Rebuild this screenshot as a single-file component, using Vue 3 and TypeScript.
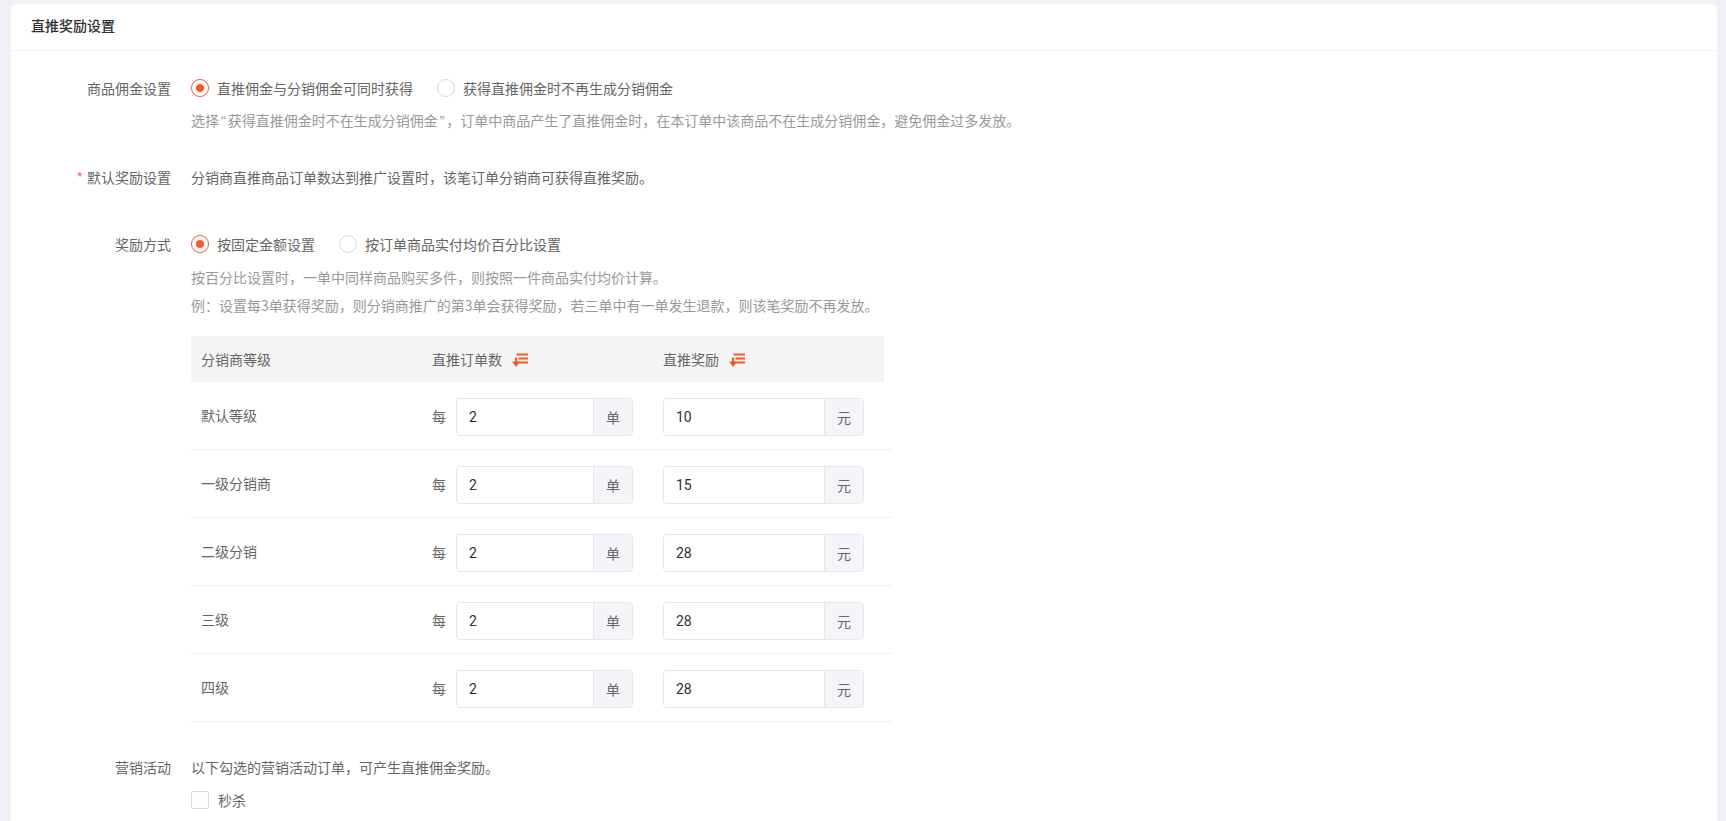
<script setup lang="ts">
interface Row { name: string; orders: string; reward: string }
const rows: Row[] = [
  { name: '默认等级', orders: '2', reward: '10' },
  { name: '一级分销商', orders: '2', reward: '15' },
  { name: '二级分销', orders: '2', reward: '28' },
  { name: '三级', orders: '2', reward: '28' },
  { name: '四级', orders: '2', reward: '28' },
]
</script>

<template>
  <div class="page">
    <div class="card">
      <div class="head">直推奖励设置</div>
      <div class="body">
        <div class="item first">
          <div class="label">商品佣金设置</div>
          <div class="content">
            <div class="radios">
              <span class="radio on"></span><span class="rtext gap1">直推佣金与分销佣金可同时获得</span>
              <span class="radio"></span><span class="rtext">获得直推佣金时不再生成分销佣金</span>
            </div>
            <div class="hint h1">选择<span class="quote">“</span>获得直推佣金时不在生成分销佣金<span class="quote">”</span>，订单中商品产生了直推佣金时，在本订单中该商品不在生成分销佣金，避免佣金过多发放。</div>
          </div>
        </div>
        <div class="item second">
          <div class="label"><span class="star">*</span>默认奖励设置</div>
          <div class="content text">分销商直推商品订单数达到推广设置时，该笔订单分销商可获得直推奖励。</div>
        </div>
        <div class="item third">
          <div class="label">奖励方式</div>
          <div class="content">
            <div class="radios">
              <span class="radio on"></span><span class="rtext gap1">按固定金额设置</span>
              <span class="radio"></span><span class="rtext">按订单商品实付均价百分比设置</span>
            </div>
            <div class="hint h2">按百分比设置时，一单中同样商品购买多件，则按照一件商品实付均价计算。</div>
            <div class="hint h3">例：设置每3单获得奖励，则分销商推广的第3单会获得奖励，若三单中有一单发生退款，则该笔奖励不再发放。</div>
            <div class="table">
              <div class="thead">
                <div class="c1">分销商等级</div>
                <div class="c2">直推订单数
                  <svg class="sort" viewBox="0 0 16 14" width="16" height="14"><g fill="#f4592a"><rect x="4.5" y="0.5" width="11.5" height="2"/><rect x="6.5" y="4.5" width="9.5" height="2"/><rect x="6.5" y="8.5" width="9.5" height="2"/><rect x="3" y="4.5" width="2.2" height="6"/><path d="M0 8.5h8.2L4.1 14z"/></g></svg>
                </div>
                <div class="c3">直推奖励
                  <svg class="sort" viewBox="0 0 16 14" width="16" height="14"><g fill="#f4592a"><rect x="4.5" y="0.5" width="11.5" height="2"/><rect x="6.5" y="4.5" width="9.5" height="2"/><rect x="6.5" y="8.5" width="9.5" height="2"/><rect x="3" y="4.5" width="2.2" height="6"/><path d="M0 8.5h8.2L4.1 14z"/></g></svg>
                </div>
              </div>
              <div v-for="r in rows" :key="r.name" class="trow">
                <div class="c1 rname">{{ r.name }}</div>
                <div class="c2 cell">
                  <span class="each">每</span>
                  <div class="group g1">
                    <span class="val">{{ r.orders }}</span><span class="unit">单</span>
                  </div>
                </div>
                <div class="c3 cell">
                  <div class="group g2">
                    <span class="val">{{ r.reward }}</span><span class="unit">元</span>
                  </div>
                </div>
              </div>
            </div>
          </div>
        </div>
        <div class="item fourth">
          <div class="label">营销活动</div>
          <div class="content">
            <div class="text">以下勾选的营销活动订单，可产生直推佣金奖励。</div>
            <div class="check"><span class="box"></span><span class="rtext">秒杀</span></div>
          </div>
        </div>
      </div>
    </div>
  </div>
</template>

<style>
html, body { margin: 0; overflow: hidden; background: #f0f0f5; }
</style>

<style scoped>
.page {
  height: 821px;
  box-sizing: border-box;
  padding: 4px 9px 0 11px;
  overflow: hidden;
  background: #f0f0f5;
  font-family: "Noto Sans CJK SC", "Liberation Sans", sans-serif;
  font-size: 14px;
  color: #666;
}
.card { background: #fff; border-radius: 6px 6px 0 0; height: 900px; }
.head {
  height: 47px;
  line-height: 42px;
  box-sizing: border-box;
  padding-left: 20px;
  font-weight: 500;
  color: #303133;
  border-bottom: 1px solid #f0f0f0;
  font-size: 14px;
}
.body { padding-top: 25px; }
.item { display: flex; align-items: flex-start; }
.label {
  width: 160px;
  text-align: right;
  line-height: 24px;
  flex: none;
  color: #666;
}
.star { color: #f56c6c; margin-right: 4px; font-size: 14px; }
.content { margin-left: 20px; }
.text { line-height: 24px; }
.radios { display: flex; align-items: center; height: 24px; }
.radio {
  width: 18px;
  height: 18px;
  box-sizing: border-box;
  border: 1px solid #d9d9d9;
  border-radius: 50%;
  flex: none;
  margin-right: 8px;
  position: relative;
}
.radio.on { border-color: #f4592a; }
.radio.on::after {
  content: "";
  position: absolute;
  left: 4px;
  top: 4px;
  width: 8px;
  height: 8px;
  border-radius: 50%;
  background: #f4592a;
}
.rtext { line-height: 24px; }
.gap1 { margin-right: 24px; }
.hint { color: #999; line-height: 20px; }
.quote { font-family: "Liberation Sans", sans-serif; margin: 0 2px; }
.h1 { margin-top: 10px; }
.h2 { margin-top: 11px; }
.h3 { margin-top: 8px; }
.second { margin-top: 34px; }
.third { margin-top: 43px; }
.fourth { margin-top: 33px; }
.table { width: 700px; margin-top: 21px; }
.thead {
  width: 693px;
  height: 46px;
  background: #f5f5f5;
  display: flex;
  align-items: center;
}
.trow {
  height: 68px;
  box-sizing: border-box;
  padding-top: 2px;
  border-bottom: 1px solid #ebeef5;
  display: flex;
  align-items: center;
}
.c1 { width: 241px; padding-left: 10px; box-sizing: border-box; }
.rname { margin-bottom: 4px; }
.c2 { width: 231px; display: flex; align-items: center; }
.c3 { display: flex; align-items: center; }
.sort { margin-left: 10px; margin-top: 2px; }
.each { margin-right: 10px; margin-bottom: 2px; }
.group {
  height: 38px;
  box-sizing: border-box;
  border: 1px solid #e4e7ed;
  border-radius: 4px;
  display: flex;
  align-items: center;
  overflow: hidden;
}
.g1 { width: 177px; }
.g2 { width: 201px; }
.val { flex: 1; padding-left: 12px; color: #303133; font-family: "Roboto", "Liberation Sans", sans-serif; font-size: 14px; }
.unit {
  width: 38px;
  height: 100%;
  flex: none;
  display: flex;
  align-items: center;
  justify-content: center;
  background: #f4f5f8;
  border-left: 1px solid #e4e7ed;
}
.check { display: flex; align-items: center; margin-top: 9px; height: 24px; }
.box {
  width: 18px;
  height: 18px;
  box-sizing: border-box;
  border: 1px solid #d9d9d9;
  border-radius: 2px;
  margin-right: 9px;
}
</style>
